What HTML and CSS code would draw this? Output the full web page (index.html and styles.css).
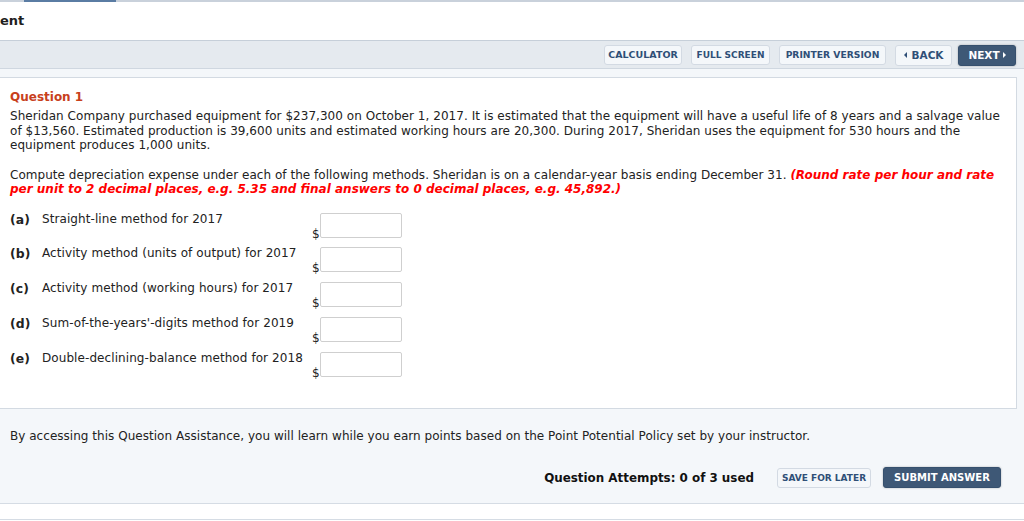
FILE: index.html
```html
<!DOCTYPE html>
<html>
<head>
<meta charset="utf-8">
<link rel="stylesheet" href="styles.css">
</head>
<body>
<div class="topline"><span class="topline-active"></span></div>
<div class="title">ent</div>
<div class="toolbar">
  <button class="btn btn-calc">CALCULATOR</button>
  <button class="btn btn-full">FULL SCREEN</button>
  <button class="btn btn-print">PRINTER VERSION</button>
  <button class="btn btn-back"><span class="tri tri-left"></span>BACK</button>
  <button class="btn btn-dark btn-next">NEXT<span class="tri tri-right"></span></button>
</div>
<div class="main">
  <div class="panel">
    <div class="qtitle">Question 1</div>
    <p class="para">Sheridan Company purchased equipment for $237,300 on October 1, 2017. It is estimated that the equipment will have a useful life of 8 years and a salvage value of $13,560. Estimated production is 39,600 units and estimated working hours are 20,300. During 2017, Sheridan uses the equipment for 530 hours and the equipment produces 1,000 units.</p>
    <p class="para">Compute depreciation expense under each of the following methods. Sheridan is on a calendar-year basis ending December 31. <em class="hint">(Round rate per hour and rate per unit to 2 decimal places, e.g. 5.35 and final answers to 0 decimal places, e.g. 45,892.)</em></p>
    <div class="rows">
      <div class="row"><span class="lbl">(a)</span><span class="txt">Straight-line method for 2017</span><span class="dollar">$</span><span class="inp"></span></div>
      <div class="row"><span class="lbl">(b)</span><span class="txt">Activity method (units of output) for 2017</span><span class="dollar">$</span><span class="inp"></span></div>
      <div class="row"><span class="lbl">(c)</span><span class="txt">Activity method (working hours) for 2017</span><span class="dollar">$</span><span class="inp"></span></div>
      <div class="row"><span class="lbl">(d)</span><span class="txt">Sum-of-the-years'-digits method for 2019</span><span class="dollar">$</span><span class="inp"></span></div>
      <div class="row"><span class="lbl">(e)</span><span class="txt">Double-declining-balance method for 2018</span><span class="dollar">$</span><span class="inp"></span></div>
    </div>
  </div>
  <div class="assist">By accessing this Question Assistance, you will learn while you earn points based on the Point Potential Policy set by your instructor.</div>
  <div class="actions">
    <span class="attempts">Question Attempts: 0 of 3 used</span>
    <button class="btn btn-save">SAVE FOR LATER</button>
    <button class="btn btn-dark btn-submit">SUBMIT ANSWER</button>
  </div>
</div>
<div class="bottom"></div>
</body>
</html>
```
FILE: styles.css
```css
html, body {
  margin: 0;
  padding: 0;
  background: #ffffff;
  font-family: "DejaVu Sans", Verdana, sans-serif;
  color: #222;
}
.topline {
  height: 2px;
  background: #c9d1db;
  position: relative;
}
.topline-active {
  position: absolute;
  left: 24px;
  top: 0;
  width: 92px;
  height: 2px;
  background: #5a7ca3;
}
.title {
  height: 38px;
  box-sizing: border-box;
  padding-top: 11px;
  font-size: 13px;
  font-weight: bold;
  color: #1e1e1e;
  line-height: 16px;
}
.toolbar {
  height: 29px;
  box-sizing: border-box;
  background: #e5eaef;
  border-top: 1px solid #c6cfd9;
  border-bottom: 1px solid #cfd7e0;
  display: flex;
  align-items: center;
  justify-content: flex-end;
  padding-right: 8px;
  padding-top: 1px;
  gap: 9px;
}
.btn {
  font-family: "DejaVu Sans", Verdana, sans-serif;
  font-size: 9.5px;
  font-weight: bold;
  color: #2f4f77;
  background: #f4f7fa;
  border: 1px solid #d3dae3;
  border-radius: 3px;
  height: 20px;
  padding: 0;
  line-height: 18px;
  margin: 0;
  display: inline-flex;
  align-items: center;
  justify-content: center;
  box-sizing: border-box;
}
.btn-calc { width: 78px; }
.btn-full { width: 79px; font-size: 9px; }
.btn-print { width: 107px; font-size: 9.2px; }
.btn-back { font-size: 10.5px; width: 57px; height: 21px; }
.btn-dark {
  background: #3e5876;
  border-color: #36506e;
  color: #ffffff;
  box-shadow: 0 0 2px rgba(0,0,0,0.3);
}
.btn-next { font-size: 10.5px; width: 58px; height: 21px; margin-left: -3px; }
.tri { display: inline-block; width: 0; height: 0; border-top: 3.5px solid transparent; border-bottom: 3.5px solid transparent; }
.tri-left { border-right: 3.5px solid #2f4f77; margin-right: 5px; }
.tri-right { border-left: 3.5px solid #ffffff; margin-left: 3px; }
.main {
  background: #f4f7fa;
  padding: 8px 7px 0 0;
  border-bottom: 1px solid #d5dce4;
  height: 435px;
  box-sizing: border-box;
}
.panel {
  background: #ffffff;
  border: 1px solid #d3dae2;
  border-left: none;
  height: 332px;
  box-sizing: border-box;
  padding: 11px 8px 0 10px;
}
.qtitle {
  color: #c8401c;
  font-weight: bold;
  font-size: 12px;
  line-height: 16px;
}
.para {
  margin: 4px 0 0 0;
  font-size: 12px;
  letter-spacing: 0.04px;
  line-height: 14.5px;
  color: #222;
}
.para + .para { margin-top: 15px; }
.hint {
  color: #f00;
  font-weight: bold;
  font-style: italic;
  letter-spacing: 0;
}
.rows {
  margin-top: 15px;
}
.row {
  display: flex;
  align-items: flex-start;
  height: 34.8px;
  font-size: 12px;
  letter-spacing: 0.08px;
}
.lbl {
  width: 32px;
  font-weight: bold;
  font-size: 12.4px;
  line-height: 15px;
}
.txt {
  width: 270px;
  line-height: 15px;
}
.dollar {
  margin-top: 15px;
  width: 8px;
  line-height: 15px;
}
.inp {
  width: 80px;
  height: 23px;
  border: 1px solid #cfcfcf;
  border-radius: 2px;
  margin-top: 1px;
}
.assist {
  font-size: 12px;
  color: #222;
  padding: 20px 0 0 10px;
  line-height: 14px;
  letter-spacing: 0.03px;
}
.actions {
  display: flex;
  justify-content: flex-end;
  align-items: center;
  padding-right: 16px;
  margin-top: 24px;
}
.attempts {
  font-weight: bold;
  font-size: 11.9px;
  color: #111;
  margin-right: 23px;
}
.btn-save { font-size: 9px; width: 94px; height: 20px; margin-right: 12px; }
.btn-submit { font-size: 10px; width: 118px; height: 21px; }
.bottom {
  height: 15px;
  border-bottom: 1px solid #d5dce4;
}
```
